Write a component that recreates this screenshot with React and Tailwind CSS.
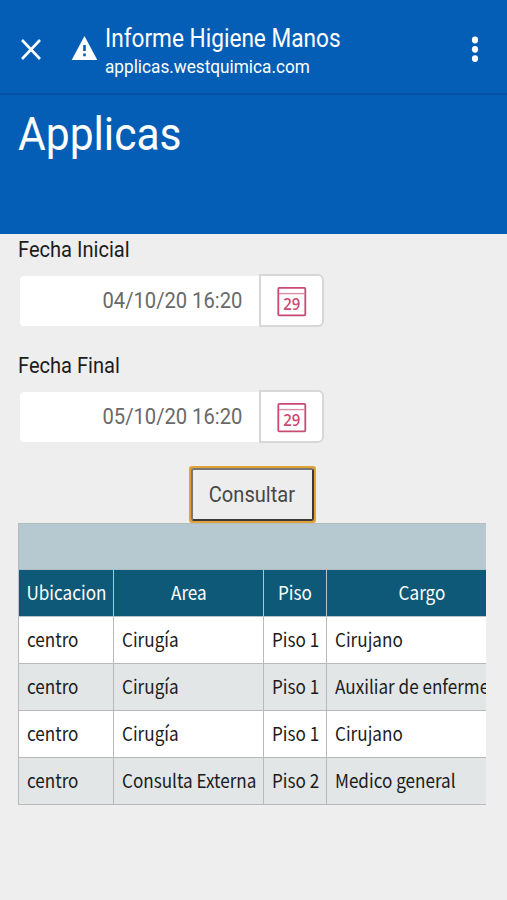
const columns = ["Ubicacion", "Area", "Piso", "Cargo"];

const rows = [
  ["centro", "Cirugía", "Piso 1", "Cirujano"],
  ["centro", "Cirugía", "Piso 1", "Auxiliar de enferme"],
  ["centro", "Cirugía", "Piso 1", "Cirujano"],
  ["centro", "Consulta Externa", "Piso 2", "Medico general"],
];

function CalendarIcon() {
  return (
    <svg width="30" height="30" viewBox="0 0 30 30" fill="none">
      <rect x="1.3" y="0.9" width="27" height="27.4" rx="1" stroke="#c94a73" strokeWidth="1.8" />
      <path d="M2 6.6H28" stroke="#dc8fa8" strokeWidth="1.4" />
      <text
        x="14.8"
        y="23"
        textAnchor="middle"
        textLength="17"
        lengthAdjust="spacingAndGlyphs"
        fontSize="16"
        fontWeight="600"
        fontFamily="Open Sans, sans-serif"
        fill="#cc4b74"
      >
        29
      </text>
    </svg>
  );
}

function DateField({ label, value }) {
  return (
    <div className="h-[116px]">
      <label className="block h-[40px] pt-px text-[22.3px] leading-[28px] text-[#1c1c1c]">
        <span className="inline-block origin-left scale-x-90">{label}</span>
      </label>
      <div className="flex items-center pl-[2px]">
        <div className="flex h-[50px] w-[239px] items-center justify-end rounded-l-[4px] bg-white pr-[17px] text-[22.4px] text-[#696969]">
          <span className="inline-block origin-right scale-x-90 whitespace-nowrap">{value}</span>
        </div>
        <button className="flex h-[53px] w-[65px] items-center justify-center rounded-r-[6px] border-2 border-[#d6d8d8] bg-white pt-[2px]">
          <CalendarIcon />
        </button>
      </div>
    </div>
  );
}

export default function App() {
  return (
    <div className="h-[900px] w-[507px] overflow-hidden bg-[#eeeeee] font-['Roboto',sans-serif]">
      {/* Browser bar */}
      <header className="flex h-[95px] items-start border-b-2 border-[#0352a4] bg-[#045eb6] text-white">
        <svg className="mt-[38px] ml-[20px] shrink-0" width="22" height="23" viewBox="0 0 22 23">
          <path d="M2 2L20 21M20 2L2 21" stroke="white" strokeWidth="2.6" />
        </svg>
        <svg className="mt-[35px] ml-[29px] shrink-0" width="27" height="26" viewBox="0 0 27 26">
          <path d="M13.5 1L26.3 25H0.7Z" fill="white" />
          <path d="M13.5 10V16M13.5 18.5V21.2" stroke="#045eb6" strokeWidth="2.6" />
        </svg>
        <div className="mt-[22px] ml-[7px] grow whitespace-nowrap">
          <p className="h-[32px] text-[25px] leading-[33px]">
            <span className="inline-block origin-left scale-x-[0.905]">Informe Higiene Manos</span>
          </p>
          <p className="h-[26px] text-[19px] leading-[26px]">
            <span className="inline-block origin-left scale-x-[0.905]">applicas.westquimica.com</span>
          </p>
        </div>
        <svg className="mt-[35px] mr-[28px] shrink-0" width="8" height="28" viewBox="0 0 8 28" fill="white">
          <ellipse cx="4" cy="5" rx="3.1" ry="3.4" />
          <ellipse cx="4" cy="14.3" rx="3.1" ry="3.4" />
          <ellipse cx="4" cy="23.6" rx="3.1" ry="3.4" />
        </svg>
      </header>

      {/* Page title */}
      <div className="h-[139px] bg-[#045eb6] pt-[9px] pl-[18px] text-[47px] leading-[60px] text-white">
        <h1 className="inline-block origin-left scale-x-[0.905]">Applicas</h1>
      </div>

      <main className="pl-[18px]">
        <DateField label="Fecha Inicial" value="04/10/20 16:20" />
        <DateField label="Fecha Final" value="05/10/20 16:20" />

        <button className="ml-[171px] block h-[57px] w-[127px] rounded-[3px] border-2 border-[#e0a33a] bg-[#e0a33a]">
          <span className="flex h-full w-full items-center justify-center rounded-[3px] border-2 border-t-[#777777] border-r-[#3a3a3a] border-b-[#3a3a3a] border-l-[#777777] bg-[#ededed] pr-[2px] text-[22.3px] text-[#484848]">
            <span className="inline-block scale-x-90">Consultar</span>
          </span>
        </button>

        {/* Results */}
        <div className="w-[468px] overflow-hidden font-['Noto_Sans_CJK_SC',sans-serif] text-[19px]">
          <table className="w-[499px] table-fixed border-collapse whitespace-nowrap">
            <colgroup>
              <col className="w-[95px]" />
              <col className="w-[150px]" />
              <col className="w-[63px]" />
              <col className="w-[190px]" />
            </colgroup>
            <thead>
              <tr className="h-[46px] bg-[#b6c9d0]">
                <th colSpan={4} className="border border-[#b3bcbf]"></th>
              </tr>
              <tr className="h-[47px] bg-[#0f5978] text-white">
                {columns.map((name) => (
                  <th key={name} className="border border-[#b9c4c9] p-0 pb-[2px] leading-[28px] font-normal">
                    <span className="inline-block scale-x-[0.9]">{name}</span>
                  </th>
                ))}
              </tr>
            </thead>
            <tbody className="text-[#1b1b1b]">
              {rows.map((row, index) => (
                <tr key={index} className="h-[47px] bg-white even:bg-[#e2e6e7]">
                  {row.map((cell, i) => (
                    <td key={i} className="border border-[#b9b9b9] pt-0 pr-0 pb-[2px] pl-[7.5px] leading-[28px]">
                      <span className="inline-block origin-left scale-x-[0.9]">{cell}</span>
                    </td>
                  ))}
                </tr>
              ))}
            </tbody>
          </table>
        </div>
      </main>
    </div>
  );
}
